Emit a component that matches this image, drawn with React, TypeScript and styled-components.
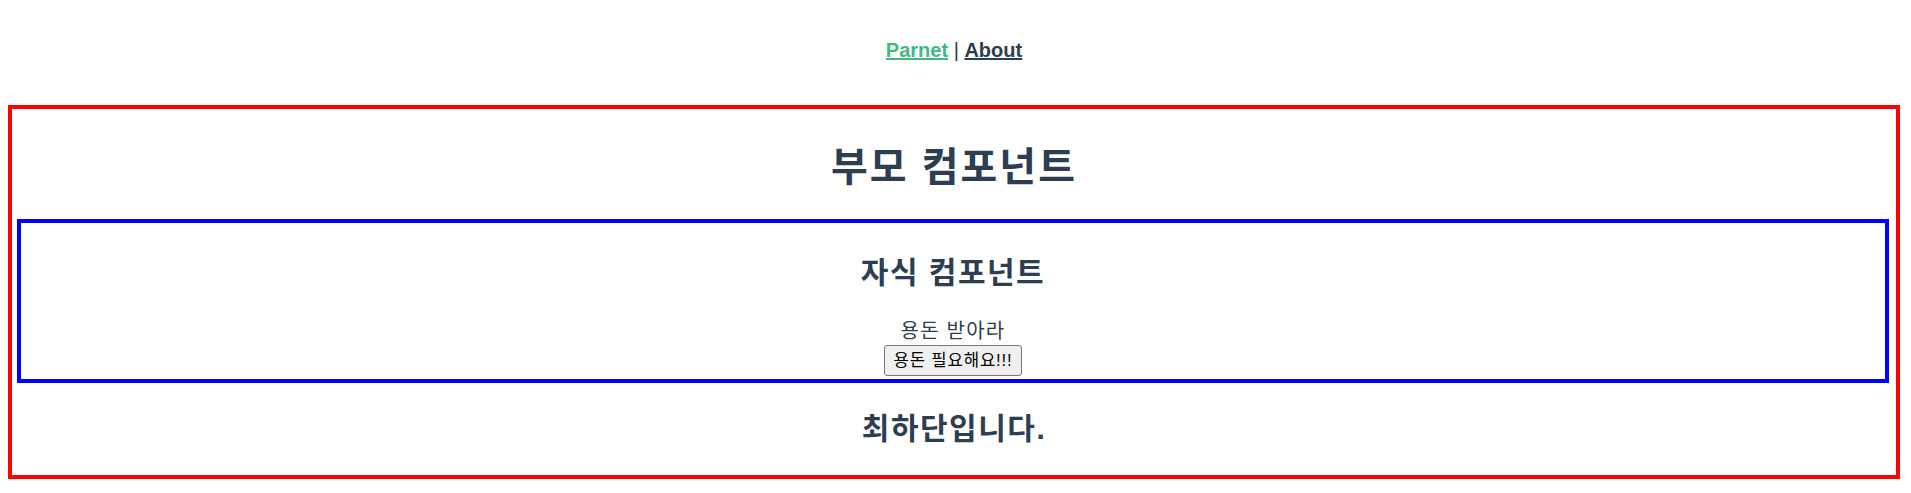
import styled, { createGlobalStyle } from "styled-components";

const GlobalStyle = createGlobalStyle`
  body {
    margin: 0;
    background: #ffffff;
  }
`;

const Page = styled.div`
  padding: 0 11px 0 8px;
  font-family: "Liberation Sans", "Noto Sans CJK KR", sans-serif;
  font-size: 20px;
  text-align: center;
  color: #2c3e50;
`;

const Nav = styled.nav`
  padding: 39px 0 43px;
  line-height: 23px;
`;

const NavLink = styled.a<{ $active?: boolean }>`
  font-weight: bold;
  color: ${(props) => (props.$active ? "#42b983" : "#2c3e50")};
  text-decoration: underline;
  cursor: pointer;
`;

const Parent = styled.div`
  border: 4px solid #ff0000;
  padding: 0 0 1px;
`;

const Title = styled.h1`
  margin: 32px 0 25px;
  font-size: 40px;
  line-height: 53px;
  font-weight: bold;
  letter-spacing: 0.05em;
`;

const Child = styled.div`
  margin: 0 7px 0 5px;
  border: 4px solid #0000ff;
`;

const SubTitle = styled.h2<{ $top?: number }>`
  margin: ${(props) => props.$top ?? 25}px 0 25px;
  font-size: 30px;
  line-height: 40px;
  font-weight: bold;
  letter-spacing: 0.05em;
`;

const Message = styled.div`
  line-height: 27px;
  letter-spacing: 0.06em;
`;

const MoneyButton = styled.button`
  font-family: "Liberation Sans", "Noto Sans CJK KR", sans-serif;
  font-size: 16.7px;
  line-height: 23px;
  letter-spacing: 0.05em;
  color: #000000;
  background: #efefef;
  border: 1px solid #767676;
  border-radius: 3px;
  padding: 3px 8px;
  margin-bottom: 3px;
  cursor: pointer;
`;

const App = () => {
  return (
    <>
      <GlobalStyle />
      <Page>
        <Nav>
          <NavLink $active>Parnet</NavLink> | <NavLink>About</NavLink>
        </Nav>
        <Parent>
          <Title>부모 컴포넌트</Title>
          <Child>
            <SubTitle $top={30}>자식 컴포넌트</SubTitle>
            <Message>용돈 받아라</Message>
            <MoneyButton>용돈 필요해요!!!</MoneyButton>
          </Child>
          <SubTitle $top={26}>최하단입니다.</SubTitle>
        </Parent>
      </Page>
    </>
  );
};

export default App;
